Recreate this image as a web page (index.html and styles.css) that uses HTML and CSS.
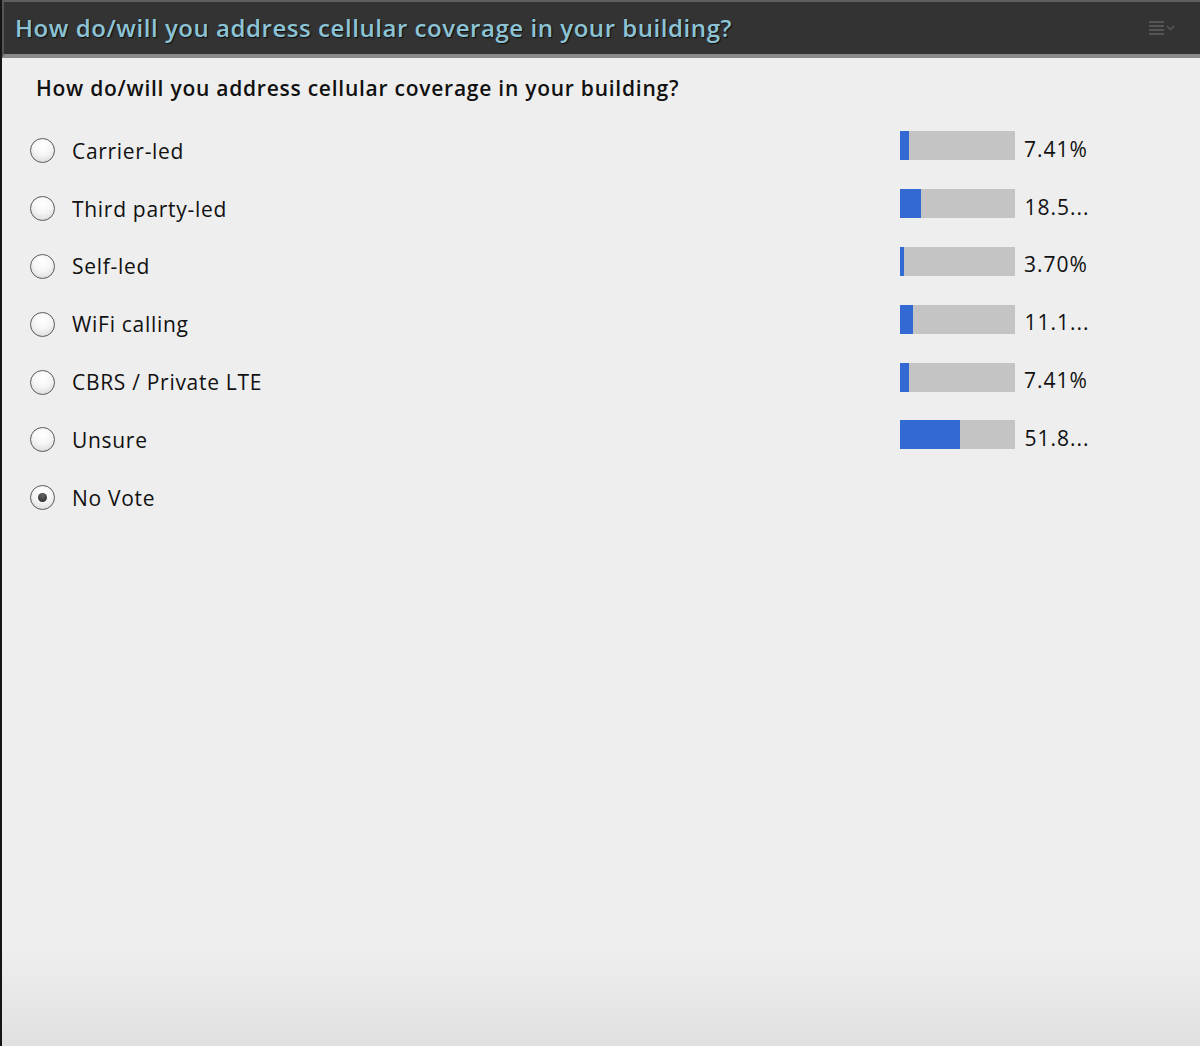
FILE: index.html
```html
<!DOCTYPE html>
<html>
<head>
<meta charset="utf-8">
<link rel="stylesheet" href="styles.css">
</head>
<body>
<div class="window">
  <div class="titlebar">
    <div class="title">How do/will you address cellular coverage in your building?</div>
    <div class="menu">
      <svg width="30" height="16" viewBox="0 0 30 16">
        <g stroke="#555" stroke-width="2">
          <line x1="1" y1="2" x2="16" y2="2"/>
          <line x1="1" y1="6" x2="16" y2="6"/>
          <line x1="1" y1="10" x2="16" y2="10"/>
          <line x1="1" y1="14" x2="16" y2="14"/>
        </g>
        <path d="M19 6 L22.5 9.5 L26 6" fill="none" stroke="#555" stroke-width="1.6"/>
      </svg>
    </div>
  </div>
  <div class="content">
    <div class="question">How do/will you address cellular coverage in your building?</div>
    <div class="options">
      <div class="row"><span class="radio"></span><span class="label">Carrier-led</span><span class="bar"><span class="fill" style="width:7.41%"></span></span><span class="pct">7.41%</span></div>
      <div class="row"><span class="radio"></span><span class="label">Third party-led</span><span class="bar"><span class="fill" style="width:18.5%"></span></span><span class="pct trunc">18.5...</span></div>
      <div class="row"><span class="radio"></span><span class="label">Self-led</span><span class="bar"><span class="fill" style="width:3.7%"></span></span><span class="pct">3.70%</span></div>
      <div class="row"><span class="radio"></span><span class="label">WiFi calling</span><span class="bar"><span class="fill" style="width:11.1%"></span></span><span class="pct trunc">11.1...</span></div>
      <div class="row"><span class="radio"></span><span class="label">CBRS / Private LTE</span><span class="bar"><span class="fill" style="width:7.41%"></span></span><span class="pct">7.41%</span></div>
      <div class="row"><span class="radio"></span><span class="label">Unsure</span><span class="bar"><span class="fill" style="width:51.85%"></span></span><span class="pct trunc">51.8...</span></div>
      <div class="row"><span class="radio checked"></span><span class="label">No Vote</span></div>
    </div>
  </div>
</div>
</body>
</html>
```

FILE: styles.css
```css
html, body {
  margin: 0;
  padding: 0;
  background: #eeeeee;
}
.window {
  width: 1200px;
  height: 1046px;
  box-sizing: border-box;
  display: flex;
  flex-direction: column;
  border-left: 2px solid #151515;
  background: linear-gradient(to bottom, #eeeeee 0, #eeeeee 950px, #e0e0e0 1046px);
  font-family: "Open Sans", "DejaVu Sans", sans-serif;
}
.titlebar {
  height: 58px;
  box-sizing: border-box;
  background: #333333;
  border-top: 2px solid #5e5e5e;
  border-left: 2px solid #555555;
  border-bottom: 4px solid #8a8a8a;
  display: flex;
  align-items: center;
  justify-content: space-between;
  padding: 0 22px 2px 11px;
}
.title {
  font-size: 24px;
  font-weight: 600;
  color: #8cc4d6;
  letter-spacing: 0.55px;
  text-shadow: 1px 1px 1px #0d0d0d;
}
.menu {
  display: flex;
  align-items: center;
  padding-top: 2px;
}
.content {
  padding: 15px 0 0 28px;
}
.question {
  font-size: 21px;
  font-weight: 600;
  color: #111;
  letter-spacing: 0.75px;
  padding-left: 6px;
  height: 30px;
  line-height: 30px;
}
.options {
  margin-top: 19px;
  display: flex;
  flex-direction: column;
}
.row {
  height: 57.8px;
  display: flex;
  align-items: center;
}
.radio {
  width: 25px;
  height: 25px;
  border-radius: 50%;
  border: 1.5px solid #5a5a5a;
  background: radial-gradient(circle at 50% 30%, #ffffff 0, #f6f6f6 45%, #d4d4d4 100%);
  box-sizing: border-box;
  flex: none;
  position: relative;
}
.radio.checked::after {
  content: "";
  position: absolute;
  left: 6.5px;
  top: 6.5px;
  width: 9px;
  height: 9px;
  border-radius: 50%;
  background: radial-gradient(circle at 50% 30%, #666 0, #222 100%);
}
.label {
  margin-left: 17px;
  font-size: 21px;
  color: #111;
  letter-spacing: 0.7px;
  width: 828px;
  flex: none;
}
.bar {
  width: 115px;
  height: 29px;
  background: #c4c4c4;
  display: flex;
  flex: none;
  margin-top: -10px;
}
.fill {
  height: 100%;
  background: #3269d2;
}
.pct {
  width: 82px;
  text-align: center;
  font-size: 21px;
  color: #111;
  letter-spacing: 1px;
  margin-top: -4px;
}
.pct.trunc {
  padding-left: 1px;
}
```
